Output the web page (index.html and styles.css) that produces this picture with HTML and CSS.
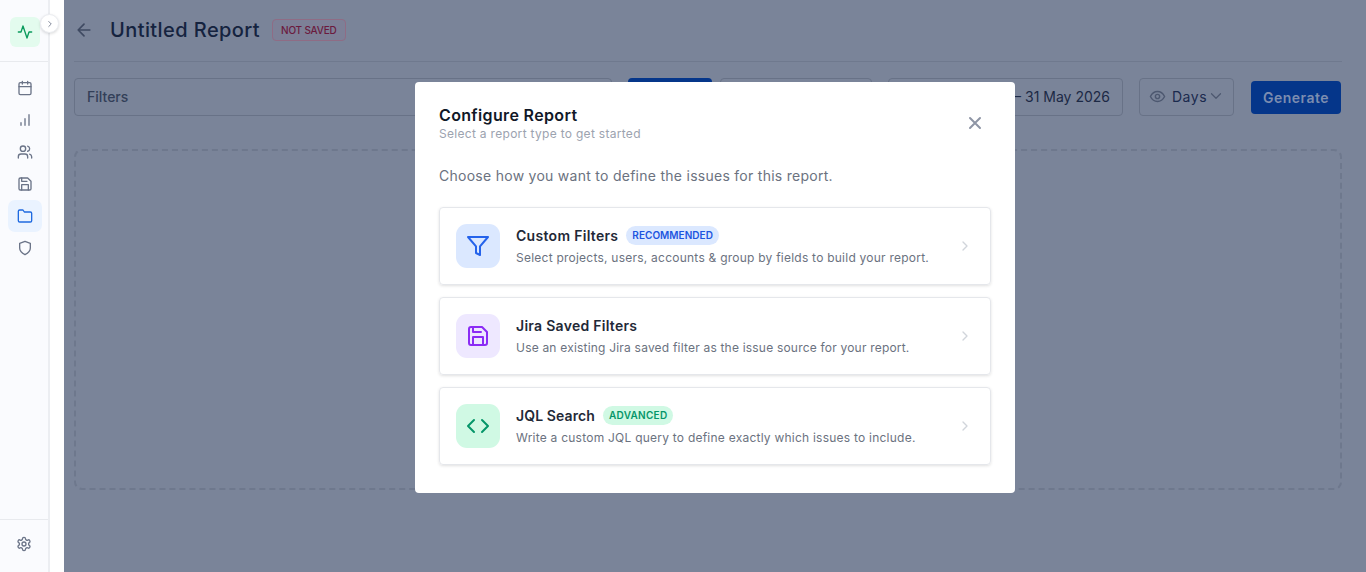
FILE: index.html
```html
<!DOCTYPE html>
<html lang="en">
<head>
    <meta charset="UTF-8">
    <meta name="viewport" content="width=device-width, initial-scale=1.0">
    <title>Untitled Report</title>
    <link rel="stylesheet" href="styles.css">
</head>
<body>
    <div class="app">
        <!-- sidebar -->
        <aside class="sidebar">
            <div class="side-top">
                <div class="logo">
                    <svg width="16" height="16" viewBox="0 0 24 24" class="ico"><path d="M22 12h-4l-3 9L9 3l-3 9H2"/></svg>
                </div>
                <button class="toggle">
                    <svg width="10" height="10" viewBox="0 0 24 24" class="ico"><path d="m9 18 6-6-6-6"/></svg>
                </button>
            </div>
            <nav class="side-nav">
                <a class="nav-item"><svg width="16" height="16" viewBox="0 0 24 24" class="ico"><rect x="3" y="4" width="18" height="18" rx="2"/><path d="M16 2v4M8 2v4M3 10h18"/></svg></a>
                <a class="nav-item"><svg width="16" height="16" viewBox="0 0 24 24" class="ico"><path d="M12 20V10M18 20V4M6 20v-4"/></svg></a>
                <a class="nav-item"><svg width="16" height="16" viewBox="0 0 24 24" class="ico"><path d="M16 21v-2a4 4 0 0 0-4-4H6a4 4 0 0 0-4 4v2"/><circle cx="9" cy="7" r="4"/><path d="M22 21v-2a4 4 0 0 0-3-3.87M16 3.13a4 4 0 0 1 0 7.75"/></svg></a>
                <a class="nav-item"><svg width="16" height="16" viewBox="0 0 24 24" class="ico"><path d="M19 21H5a2 2 0 0 1-2-2V5a2 2 0 0 1 2-2h11l5 5v11a2 2 0 0 1-2 2z"/><path d="M17 21v-8H7v8M7 3v5h8"/></svg></a>
                <a class="nav-item active"><svg width="16" height="16" viewBox="0 0 24 24" class="ico"><path d="M22 19a2 2 0 0 1-2 2H4a2 2 0 0 1-2-2V5a2 2 0 0 1 2-2h5l2 3h9a2 2 0 0 1 2 2z"/></svg></a>
                <a class="nav-item"><svg width="16" height="16" viewBox="0 0 24 24" class="ico"><path d="M12 22s8-4 8-10V5l-8-3-8 3v7c0 6 8 10 8 10z"/></svg></a>
            </nav>
            <div class="side-bottom">
                <svg width="16" height="16" viewBox="0 0 24 24" class="ico"><path d="M12.22 2h-.44a2 2 0 0 0-2 2v.18a2 2 0 0 1-1 1.73l-.43.25a2 2 0 0 1-2 0l-.15-.08a2 2 0 0 0-2.73.73l-.22.38a2 2 0 0 0 .73 2.73l.15.1a2 2 0 0 1 1 1.72v.51a2 2 0 0 1-1 1.74l-.15.09a2 2 0 0 0-.73 2.73l.22.38a2 2 0 0 0 2.73.73l.15-.08a2 2 0 0 1 2 0l.43.25a2 2 0 0 1 1 1.73V20a2 2 0 0 0 2 2h.44a2 2 0 0 0 2-2v-.18a2 2 0 0 1 1-1.73l.43-.25a2 2 0 0 1 2 0l.15.08a2 2 0 0 0 2.73-.73l.22-.39a2 2 0 0 0-.73-2.73l-.15-.08a2 2 0 0 1-1-1.74v-.5a2 2 0 0 1 1-1.74l.15-.09a2 2 0 0 0 .73-2.73l-.22-.38a2 2 0 0 0-2.73-.73l-.15.08a2 2 0 0 1-2 0l-.43-.25a2 2 0 0 1-1-1.73V4a2 2 0 0 0-2-2z"/><circle cx="12" cy="12" r="3"/></svg>
            </div>
        </aside>

        <!-- page behind the dialog, already dimmed -->
        <main class="main">
            <header class="page-head">
                <svg width="20" height="20" viewBox="0 0 24 24" class="ico back"><path d="M19 12H5M12 19l-7-7 7-7"/></svg>
                <h1 class="page-title">Untitled Report</h1>
                <span class="not-saved">NOT SAVED</span>
            </header>
            <div class="toolbar">
                <div class="filters">Filters</div>
                <div class="tab-blue"></div>
                <div class="tab-plain"></div>
                <div class="date-range">– 31 May 2026</div>
                <div class="days">
                    <svg width="17" height="17" viewBox="0 0 24 24" class="ico"><path d="M2 12s3.5-7 10-7 10 7 10 7-3.5 7-10 7-10-7-10-7z"/><circle cx="12" cy="12" r="3"/></svg>
                    <span>Days</span>
                    <svg width="18" height="18" viewBox="0 0 24 24" class="ico"><path d="m6 9 6 6 6-6"/></svg>
                </div>
                <button class="generate">Generate</button>
            </div>
            <div class="drop-area"></div>
        </main>
    </div>

    <!-- dialog -->
    <div class="modal">
        <div class="modal-head">
            <div>
                <h2 class="modal-title">Configure Report</h2>
                <p class="modal-sub">Select a report type to get started</p>
            </div>
            <svg width="20" height="20" viewBox="0 0 24 24" class="ico close"><path d="M18 6 6 18M6 6l12 12"/></svg>
        </div>
        <p class="modal-lead">Choose how you want to define the issues for this report.</p>
        <div class="options">
            <div class="option">
                <div class="option-icon blue">
                    <svg width="24" height="24" viewBox="0 0 24 24" class="ico"><path d="M22 3H2l8 9.46V19l4 2v-8.54L22 3z"/></svg>
                </div>
                <div class="option-body">
                    <div class="option-title"><span class="name-custom">Custom Filters</span><span class="badge badge-blue">RECOMMENDED</span></div>
                    <p class="option-desc desc-custom">Select projects, users, accounts &amp; group by fields to build your report.</p>
                </div>
                <svg width="16" height="16" viewBox="0 0 24 24" class="ico chevron"><path d="m9 18 6-6-6-6"/></svg>
            </div>
            <div class="option">
                <div class="option-icon purple">
                    <svg width="24" height="24" viewBox="0 0 24 24" class="ico"><path d="M19 21H5a2 2 0 0 1-2-2V5a2 2 0 0 1 2-2h11l5 5v11a2 2 0 0 1-2 2z"/><path d="M17 21v-8H7v8M7 3v5h8"/></svg>
                </div>
                <div class="option-body">
                    <div class="option-title"><span class="name-jira">Jira Saved Filters</span></div>
                    <p class="option-desc desc-jira">Use an existing Jira saved filter as the issue source for your report.</p>
                </div>
                <svg width="16" height="16" viewBox="0 0 24 24" class="ico chevron"><path d="m9 18 6-6-6-6"/></svg>
            </div>
            <div class="option">
                <div class="option-icon green">
                    <svg width="24" height="24" viewBox="0 0 24 24" class="ico"><path d="m16 18 6-6-6-6M8 6l-6 6 6 6"/></svg>
                </div>
                <div class="option-body">
                    <div class="option-title"><span class="name-jql">JQL Search</span><span class="badge badge-green">ADVANCED</span></div>
                    <p class="option-desc desc-jql">Write a custom JQL query to define exactly which issues to include.</p>
                </div>
                <svg width="16" height="16" viewBox="0 0 24 24" class="ico chevron"><path d="m9 18 6-6-6-6"/></svg>
            </div>
        </div>
    </div>
</body>
</html>
```

FILE: styles.css
```css
* {
    box-sizing: border-box;
}

html, body {
    height: 100%;
}

body {
    margin: 0;
    font-family: 'Inter', 'Noto Sans', sans-serif;
    background: #fff;
    overflow: hidden;
}

h1, h2, p {
    margin: 0;
}

.ico {
    fill: none;
    stroke: currentColor;
    stroke-width: 2;
    stroke-linecap: round;
    stroke-linejoin: round;
    display: block;
    flex-shrink: 0;
}

.app {
    display: flex;
    height: 572px;
}

/* sidebar */
.sidebar {
    width: 50px;
    margin-right: 14px;
    background: #fafbfe;
    border-right: 2px solid #eceef2;
    display: flex;
    flex-direction: column;
    position: relative;
    color: #6b7488;
}

.side-top {
    height: 62px;
    padding: 17px 0 0 10px;
    border-bottom: 1px solid #e8eaee;
}

.logo {
    width: 30px;
    height: 30px;
    border-radius: 6px;
    background: #e3fbee;
    color: #0a9a5c;
    display: flex;
    align-items: center;
    justify-content: center;
}

.toggle {
    position: absolute;
    left: 40px;
    top: 14px;
    width: 19px;
    height: 19px;
    padding: 0;
    border: 1px solid #eceef2;
    border-radius: 50%;
    background: #fff;
    color: #6b7488;
    box-shadow: 0 1px 3px rgba(0, 0, 0, 0.15);
    display: flex;
    align-items: center;
    justify-content: center;
}

.side-nav {
    flex: 1;
    padding: 10px 8px 0 8px;
    display: flex;
    flex-direction: column;
}

.nav-item {
    width: 34px;
    height: 32px;
    border-radius: 7px;
    display: flex;
    align-items: center;
    justify-content: center;
}

.nav-item.active {
    background: #eaf3ff;
    color: #1f6ae0;
}

.side-bottom {
    height: 53px;
    border-top: 1px solid #e8eaee;
    display: flex;
    align-items: center;
    justify-content: center;
    padding-bottom: 4px;
}

/* dimmed page */
.main {
    flex: 1;
    background: #7a8499;
    padding: 0 24px 0 10px;
}

.page-head {
    height: 62px;
    padding-bottom: 2px;
    border-bottom: 1px solid #6f798e;
    display: flex;
    align-items: center;
    color: #3f4a62;
}

.back {
    margin-right: 16px;
}

.page-title {
    font-size: 20px;
    font-weight: 500;
    letter-spacing: 0.42px;
    color: #15233f;
    margin-right: 12px;
}

.not-saved {
    height: 22px;
    padding: 0 8px;
    border: 1px solid #8f6c85;
    border-radius: 4px;
    background: #7d8097;
    color: #6b1a3e;
    font-size: 10px;
    font-weight: 500;
    line-height: 20px;
    letter-spacing: -0.2px;
}

.toolbar {
    display: flex;
    align-items: center;
    height: 38px;
    margin-top: 16px;
}

.filters {
    width: 538px;
    height: 38px;
    padding-left: 12px;
    border: 1px solid #687287;
    border-radius: 4px;
    font-size: 14px;
    font-weight: 500;
    line-height: 36px;
    color: #333f58;
}

.tab-blue {
    width: 84px;
    height: 38px;
    margin-left: 16px;
    border-radius: 4px;
    background: #05368a;
}

.tab-plain {
    width: 152px;
    height: 38px;
    margin-left: 8px;
    border: 1px solid #687287;
    border-radius: 4px;
}

.date-range {
    width: 235px;
    height: 38px;
    margin-left: 16px;
    padding-right: 12px;
    border: 1px solid #687287;
    border-radius: 4px;
    text-align: right;
    font-size: 14px;
    line-height: 36px;
    color: #1c2945;
}

.days {
    width: 95px;
    height: 38px;
    margin-left: 16px;
    padding: 0 0 2px 9px;
    border: 1px solid #687287;
    border-radius: 4px;
    display: flex;
    align-items: center;
    gap: 6px;
    font-size: 14px;
    letter-spacing: 0.5px;
    color: #1a2a4e;
}

.days .ico {
    color: #4d5870;
}

.days span + .ico {
    margin-left: -6px;
    stroke-width: 1.6;
}

.generate {
    width: 90px;
    height: 33px;
    margin-left: 17px;
    border: none;
    border-radius: 4px;
    background: #05368a;
    color: #7c8db0;
    font-family: inherit;
    font-size: 14px;
    font-weight: 600;
    letter-spacing: 0.5px;
    padding: 0;
}

.drop-area {
    height: 341px;
    margin-top: 33px;
    border: 2px dashed #6e788d;
    border-radius: 8px;
}

/* dialog */
.modal {
    position: absolute;
    left: 415px;
    top: 82px;
    width: 600px;
    height: 411px;
    background: #fff;
    border-radius: 4px;
    padding: 23px 24px 24px;
}

.modal-head {
    display: flex;
    justify-content: space-between;
    align-items: center;
    padding-right: 6px;
}

.modal-title {
    font-size: 16px;
    font-weight: 600;
    line-height: 20px;
    letter-spacing: 0.35px;
    color: #111827;
}

.modal-sub {
    margin-top: 1px;
    font-size: 12px;
    line-height: 16px;
    letter-spacing: 0.3px;
    color: #9ca3af;
}

.close {
    color: #8e95a5;
    stroke-width: 2.4;
    margin-bottom: 2px;
}

.modal-lead {
    margin-top: 23px;
    font-size: 14px;
    line-height: 22px;
    letter-spacing: 0.27px;
    color: #6b7280;
}

.options {
    margin-top: 20px;
    display: flex;
    flex-direction: column;
    gap: 12px;
}

.option {
    height: 78px;
    border: 1px solid #e5e7eb;
    border-radius: 4px;
    box-shadow: 0 1px 3px rgba(0, 0, 0, 0.12);
    padding: 0 17px 0 16px;
    display: flex;
    align-items: center;
}

.option-icon {
    width: 44px;
    height: 44px;
    border-radius: 11px;
    display: flex;
    align-items: center;
    justify-content: center;
    margin-right: 16px;
}

.blue {
    background: #dbe8ff;
    color: #2563eb;
}

.purple {
    background: #eee8ff;
    color: #8b2cf5;
}

.green {
    background: #d0f9e4;
    color: #059669;
}

.option-body {
    flex: 1;
}

.option-title {
    display: flex;
    align-items: center;
    height: 20px;
    gap: 8px;
    font-size: 14px;
    font-weight: 600;
    letter-spacing: 0.1px;
    color: #1f2937;
}

.name-custom {
    letter-spacing: 0.3px;
}

.name-jira {
    letter-spacing: 0.28px;
}

.badge {
    height: 19px;
    padding: 0 6px;
    border-radius: 10px;
    font-size: 10px;
    font-weight: 600;
    line-height: 19px;
    letter-spacing: 0.3px;
}

.badge-blue {
    background: #dbe8ff;
    color: #1d55e0;
    letter-spacing: 0.03px;
}

.badge-green {
    background: #d0f9e4;
    color: #059669;
}

.option-desc {
    margin-top: 3px;
    font-size: 12px;
    line-height: 18px;
    color: #6b7280;
}

.desc-custom {
    letter-spacing: 0.235px;
}

.desc-jira {
    letter-spacing: 0.2px;
}

.desc-jql {
    letter-spacing: 0.234px;
}

.chevron {
    color: #d1d5db;
}
```
